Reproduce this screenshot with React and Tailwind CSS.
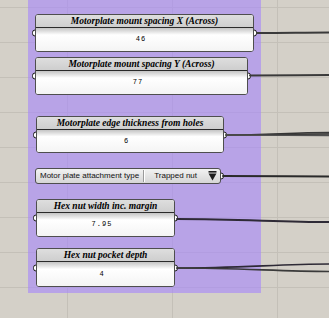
import React from "react";

function Ports({ input = true }) {
  return (
    <>
      {input && (
        <div className="absolute left-[-3px] top-1/2 -translate-y-1/2 w-[6px] h-[7px] rounded-full border-[1.5px] border-[#1a1a1a] bg-white z-0" />
      )}
      <div className="absolute right-[-3px] top-1/2 -translate-y-1/2 w-[6px] h-[7px] rounded-full border-[1.5px] border-[#1a1a1a] bg-white z-0" />
    </>
  );
}

function Slider({ title, value, className }) {
  return (
    <div className={"relative shrink-0 " + className}>
      <Ports />
      <div className="relative z-10 h-full flex flex-col rounded-[3px] border border-[#4e4e4e] overflow-hidden bg-white">
        <div className="h-[13px] shrink-0 bg-gradient-to-b from-[#dedede] to-[#cecece] border-b-[1.5px] border-[#2a2a2a] text-center font-['Liberation_Serif',serif] font-bold italic text-[9.5px] leading-[12px] text-black whitespace-nowrap">
          {title}
        </div>
        <div className="flex-1 bg-gradient-to-b from-[#c4c4c4] via-white via-[30%] to-[#f4f4f4] flex items-center justify-center pr-[7px] font-['Liberation_Mono',monospace] text-[7px] tracking-[1px] text-black">
          {value}
        </div>
      </div>
    </div>
  );
}

function Dropdown() {
  return (
    <div className="relative shrink-0 w-[186px] h-[16px] mt-[15px]">
      <Ports input={false} />
      <div className="relative z-10 h-full flex items-center rounded-[3px] border border-[#4e4e4e] bg-gradient-to-b from-[#f2f2f2] to-[#d6d6d6] pl-[4px] pr-[3px] font-['Liberation_Sans',sans-serif] text-[8px] text-[#111] whitespace-nowrap">
        <span>Motor plate attachment type</span>
        <span className="mx-[4px] w-[2px] h-[12px] border-l border-[#9a9a9a] border-r border-r-white" />
        <span className="ml-[5px]">Trapped nut</span>
        <span className="flex-1" />
        <svg width="9" height="10" viewBox="0 0 9 10">
          <rect x="0.5" y="0" width="8" height="1.6" fill="#1e1e1e" />
          <polygon points="0.5,2.6 8.5,2.6 4.5,9.5" fill="#1e1e1e" />
        </svg>
      </div>
    </div>
  );
}

export default function App() {
  const hLines = [7, 42, 77, 112, 147, 182, 217, 252, 287];
  const vLines = [67, 172, 277];
  return (
    <div className="relative w-[329px] h-[318px] overflow-hidden bg-[#d4d0c8]">
      <svg className="absolute inset-0" width="329" height="318">
        {hLines.map((y) => (
          <line key={"h" + y} x1="0" x2="329" y1={y + 0.5} y2={y + 0.5} stroke="#c4c0b8" strokeWidth="1" />
        ))}
        {vLines.map((x) => (
          <line key={"v" + x} x1={x + 0.5} x2={x + 0.5} y1="0" y2="318" stroke="#c4c0b8" strokeWidth="1" />
        ))}
      </svg>

      <div className="absolute left-[28px] top-0 w-[233px] h-[293px] bg-[rgba(167,136,250,0.62)]" />

      <svg className="absolute inset-0 z-20 pointer-events-none" width="329" height="318">
        <g fill="none" strokeLinecap="round">
          <path d="M257 33 C 290 33, 300 32.5, 329 32.5" stroke="#3a3a3a" strokeWidth="2" />
          <path d="M250 75.5 C 285 75.5, 300 75, 329 75" stroke="#3a3a3a" strokeWidth="2" />
          <path d="M226 135 C 270 135, 290 132.5, 329 132.5" stroke="#3a3a3a" strokeWidth="1.6" />
          <path d="M226 135 C 270 135, 290 134, 329 134" stroke="#2c2c2c" strokeWidth="1.6" />
          <path d="M226 135 C 270 135, 290 135.5, 329 135.5" stroke="#505050" strokeWidth="1.4" />
          <path d="M223 176 C 270 176, 290 176.5, 329 176.5" stroke="#2a2a2a" strokeWidth="2" />
          <path d="M177 219 C 240 219, 280 222, 329 222" stroke="#2e2a36" strokeWidth="2" />
          <path d="M177 268 C 240 268, 280 264, 329 264" stroke="#2e2a36" strokeWidth="1.7" />
          <path d="M177 268 C 240 268, 280 271.5, 329 271.5" stroke="#3a3a3a" strokeWidth="1.7" />
        </g>
      </svg>

      <div className="absolute left-[28px] top-0 w-[233px] h-[293px] z-10 flex flex-col items-start pt-[14px] pl-[7px]">
        <Slider className="w-[219px] h-[38px]" title="Motorplate mount spacing X (Across)" value="46" />
        <Slider className="w-[213px] h-[38px] mt-[5px]" title="Motorplate mount spacing Y (Across)" value="77" />
        <Slider className="w-[188px] h-[37px] mt-[21px] ml-px" title="Motorplate edge thickness from holes" value="6" />
        <Dropdown />
        <Slider className="w-[139px] h-[38px] mt-[15px] ml-px" title="Hex nut width inc. margin" value="7.95" />
        <Slider className="w-[139px] h-[39px] mt-[11px] ml-px" title="Hex nut pocket depth" value="4" />
      </div>
    </div>
  );
}
